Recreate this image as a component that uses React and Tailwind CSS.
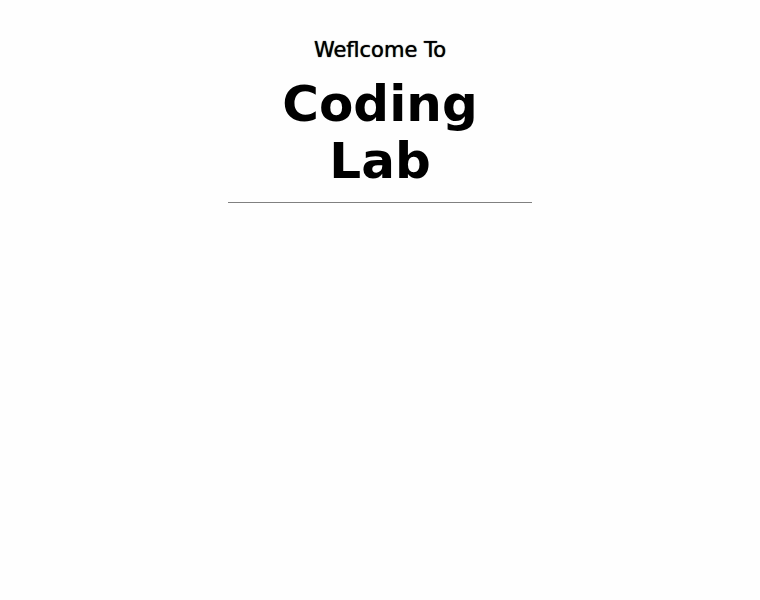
const App = () => {
  return (
    <main className="min-h-screen bg-[#fefefe] pt-8 font-['DejaVu_Sans',sans-serif] text-black">
      <header className="mx-auto w-2/5 border-b border-[#808080] pb-3 text-center">
        <p className="text-[21px] leading-9 [text-shadow:0_0_1px_#000]">Weflcome To</p>
        <h1 className="mt-2 text-[50px] leading-[57px] font-bold">
          Coding
          <br />
          Lab
        </h1>
      </header>
    </main>
  );
};

export default App;
